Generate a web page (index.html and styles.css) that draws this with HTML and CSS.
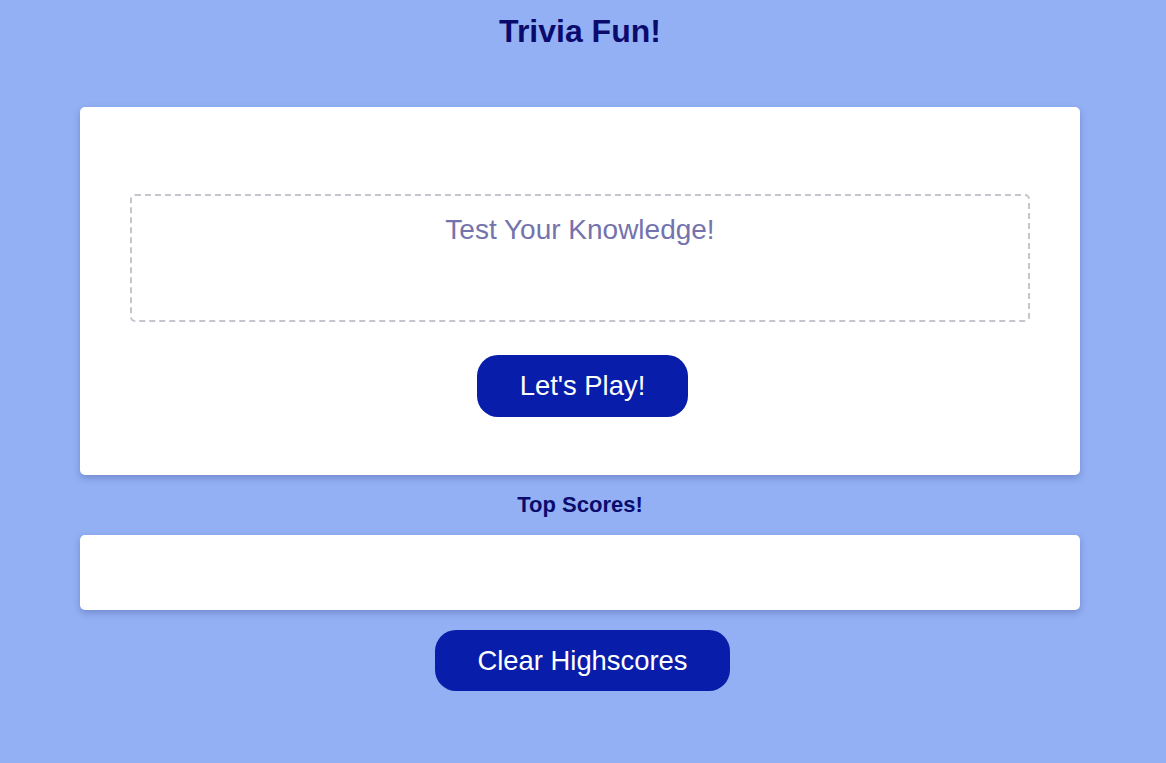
FILE: index.html
```html
<!DOCTYPE html>
<html lang="en">
<head>
<meta charset="utf-8">
<title>Trivia Fun!</title>
<link rel="stylesheet" href="styles.css">
</head>
<body>
  <div class="page">
    <h1 class="title">Trivia Fun!</h1>
    <section class="card quiz">
      <div class="question-box">
        <p class="question">Test Your Knowledge!</p>
      </div>
      <button class="btn">Let's Play!</button>
    </section>
    <h2 class="scores-title">Top Scores!</h2>
    <section class="card scores"></section>
    <div class="actions">
      <button class="btn">Clear Highscores</button>
    </div>
  </div>
</body>
</html>
```

FILE: styles.css
```css
html, body {
  margin: 0;
  padding: 0;
}
body {
  background: #93b0f4;
  font-family: "Liberation Sans", Arial, sans-serif;
  min-height: 763px;
}
.page {
  display: flex;
  flex-direction: column;
  align-items: stretch;
  padding: 0 86px 0 80px;
}
.title {
  margin: 11px 0 0;
  text-align: center;
  font-size: 32px;
  line-height: 40px;
  font-weight: bold;
  color: #0b0b6e;
}
.card {
  background: #ffffff;
  border-radius: 5px;
  box-shadow: 0 3px 7px rgba(30, 40, 110, 0.28);
}
.quiz {
  margin-top: 56px;
  padding: 87px 50px 58px;
  display: flex;
  flex-direction: column;
  align-items: center;
  gap: 33px;
}
.question-box {
  align-self: stretch;
  border: 2px dashed #c3c6cd;
  border-radius: 5px;
  height: 128px;
  padding-top: 18px;
  box-sizing: border-box;
}
.question {
  margin: 0;
  text-align: center;
  font-size: 28px;
  line-height: 32px;
  color: #7473ad;
}
.btn {
  background: #081da9;
  color: #ffffff;
  border: none;
  border-radius: 21px;
  font-family: "Liberation Sans", Arial, sans-serif;
  font-size: 27.4px;
  line-height: 32px;
  padding: 15px 43px;
  margin-left: 5px;
  cursor: pointer;
}
.scores-title {
  margin: 15px 0 0;
  text-align: center;
  font-size: 22px;
  line-height: 30px;
  font-weight: bold;
  color: #0b0b6e;
}
.scores {
  margin-top: 15px;
  height: 75px;
}
.actions {
  display: flex;
  justify-content: center;
  margin-top: 20px;
}
.actions .btn {
  padding: 14.5px 42.5px;
}
```
